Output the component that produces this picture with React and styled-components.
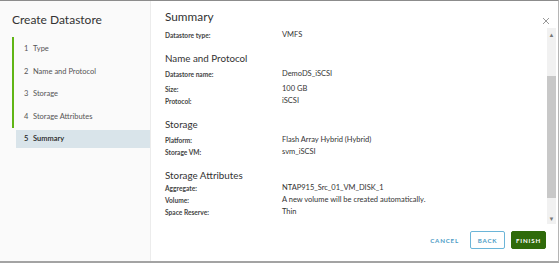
import styled, { createGlobalStyle } from "styled-components";

const GlobalStyle = createGlobalStyle`
  html, body {
    margin: 0;
    padding: 0;
    background: #ffffff;
    font-family: Lato, "Liberation Sans", sans-serif;
    color: #333;
  }
`;

const STEPS = [
  { n: 1, label: "Type" },
  { n: 2, label: "Name and Protocol" },
  { n: 3, label: "Storage" },
  { n: 4, label: "Storage Attributes" },
  { n: 5, label: "Summary", active: true },
];

const SECTIONS = [
  {
    title: "Summary",
    big: true,
    gap: 5,
    rows: [{ label: "Datastore type:", value: "VMFS" }],
  },
  {
    title: "Name and Protocol",
    gap: 3,
    rows: [
      { label: "Datastore name:", value: "DemoDS_iSCSI", tall: true },
      { label: "Size:", value: "100 GB" },
      { label: "Protocol:", value: "iSCSI" },
    ],
  },
  {
    title: "Storage",
    gap: 3,
    rows: [
      { label: "Platform:", value: "Flash Array Hybrid (Hybrid)" },
      { label: "Storage VM:", value: "svm_iSCSI" },
    ],
  },
  {
    title: "Storage Attributes",
    gap: 0,
    rows: [
      { label: "Aggregate:", value: "NTAP915_Src_01_VM_DISK_1" },
      { label: "Volume:", value: "A new volume will be created automatically." },
      { label: "Space Reserve:", value: "Thin" },
    ],
  },
];

const Modal = styled.div`
  width: 559px;
  height: 263px;
  box-sizing: border-box;
  border-top: 1px solid #8c8c8c;
  border-bottom: 2px solid #a3a3a3;
  border-right: 1px solid #b5b5b5;
  display: flex;
  background: #fff;
`;

const Sidebar = styled.nav`
  width: 150px;
  flex-shrink: 0;
  background: #fafafa;
  border-right: 1px solid #ececec;
  padding-top: 10px;
`;

const Title = styled.h1`
  margin: 0 0 0 12px;
  font-size: 12px;
  font-weight: 400;
  color: #333;
  line-height: 18px;
`;

const StepList = styled.ol`
  list-style: none;
  margin: 8px 0 0 12px;
  padding: 0;
`;

const Step = styled.li`
  display: flex;
  align-items: center;
  height: ${(p) => (p.$active ? "18px" : "22.7px")};
  margin-top: ${(p) => (p.$active ? "2px" : "0")};
  margin-left: ${(p) => (p.$active ? "4px" : "0")};
  padding-left: ${(p) => (p.$active ? "6px" : "10px")};
  font-size: 7.5px;
  color: ${(p) => (p.$active ? "#222" : "#555")};
  font-weight: ${(p) => (p.$active ? 600 : 400)};
  border-left: 2px solid ${(p) => (p.$active ? "transparent" : "#60b515")};
  background: ${(p) => (p.$active ? "#d9e4ea" : "transparent")};
  box-sizing: border-box;
`;

const StepNum = styled.span`
  width: 9px;
`;

const Main = styled.section`
  flex: 1;
  display: flex;
  flex-direction: column;
  position: relative;
`;

const Body = styled.div`
  flex: 1;
  display: flex;
  min-height: 0;
`;

const Content = styled.div`
  flex: 1;
  padding: 9px 0 0 14px;
`;

const Section = styled.div`
  margin-bottom: 10px;
`;

const SectionTitle = styled.h2`
  margin: 0;
  font-size: ${(p) => (p.$big ? "11.8px" : "9.8px")};
  font-weight: 400;
  color: #333;
  line-height: 14px;
  margin-bottom: ${(p) => p.$gap}px;
`;

const Row = styled.div`
  display: grid;
  grid-template-columns: 117px 1fr;
  line-height: 12px;
  min-height: ${(p) => (p.$tall ? "15px" : "12px")};
`;

const Label = styled.span`
  font-size: 6.6px;
  font-weight: 700;
  color: #444;
`;

const Value = styled.span`
  font-size: 7.5px;
  color: #333;
`;

const CloseBtn = styled.button`
  position: absolute;
  top: 13px;
  right: 7px;
  border: none;
  background: none;
  padding: 0;
  width: 10px;
  height: 10px;
  cursor: pointer;
`;

const Scrollbar = styled.div`
  width: 9px;
  margin: 27px 2px 0 0;
  height: 196px;
  background: #f1f1f1;
  display: flex;
  flex-direction: column;
  align-items: center;
`;

const Arrow = styled.div`
  height: 12px;
  display: flex;
  align-items: center;
  justify-content: center;
  font-size: 6px;
  color: #777;
`;

const Thumb = styled.div`
  width: 100%;
  height: 122px;
  margin-top: 36px;
  background: #c8c8c8;
`;

const Spacer = styled.div`
  flex: 1;
`;

const Footer = styled.div`
  height: 38px;
  display: flex;
  justify-content: flex-end;
  align-items: center;
  gap: 6px;
  padding-right: 12px;
  padding-bottom: 2px;
`;

const Button = styled.button`
  height: 18px;
  padding: 0;
  width: ${(p) => (p.$variant === "link" ? "auto" : "35px")};
  margin-right: ${(p) => (p.$variant === "link" ? "4px" : "0")};
  font-family: Lato, "Liberation Sans", sans-serif;
  font-size: 6.2px;
  font-weight: 700;
  letter-spacing: 0.8px;
  border-radius: 2px;
  cursor: pointer;
  border: 1px solid
    ${(p) =>
      p.$variant === "primary"
        ? "#2f6a0a"
        : p.$variant === "outline"
        ? "#6bb5d8"
        : "transparent"};
  background: ${(p) => (p.$variant === "primary" ? "#2f6a0a" : "#fff")};
  color: ${(p) => (p.$variant === "primary" ? "#fff" : "#4b9bc5")};
`;

export default function App() {
  return (
    <>
      <GlobalStyle />
      <Modal>
        <Sidebar>
          <Title>Create Datastore</Title>
          <StepList>
            {STEPS.map((s) => (
              <Step key={s.n} $active={s.active}>
                <StepNum>{s.n}</StepNum>
                {s.label}
              </Step>
            ))}
          </StepList>
        </Sidebar>
        <Main>
          <CloseBtn aria-label="Close">
            <svg width="10" height="10" viewBox="0 0 10 10">
              <path d="M2 2 L8 8 M8 2 L2 8" stroke="#999" strokeWidth="1" />
            </svg>
          </CloseBtn>
          <Body>
            <Content>
              {SECTIONS.map((sec) => (
                <Section key={sec.title}>
                  <SectionTitle $big={sec.big} $gap={sec.gap}>
                    {sec.title}
                  </SectionTitle>
                  {sec.rows.map((r) => (
                    <Row key={r.label} $tall={r.tall}>
                      <Label>{r.label}</Label>
                      <Value>{r.value}</Value>
                    </Row>
                  ))}
                </Section>
              ))}
            </Content>
            <Scrollbar>
              <Arrow>▲</Arrow>
              <Thumb />
              <Spacer />
              <Arrow>▼</Arrow>
            </Scrollbar>
          </Body>
          <Footer>
            <Button $variant="link">CANCEL</Button>
            <Button $variant="outline">BACK</Button>
            <Button $variant="primary">FINISH</Button>
          </Footer>
        </Main>
      </Modal>
    </>
  );
}
